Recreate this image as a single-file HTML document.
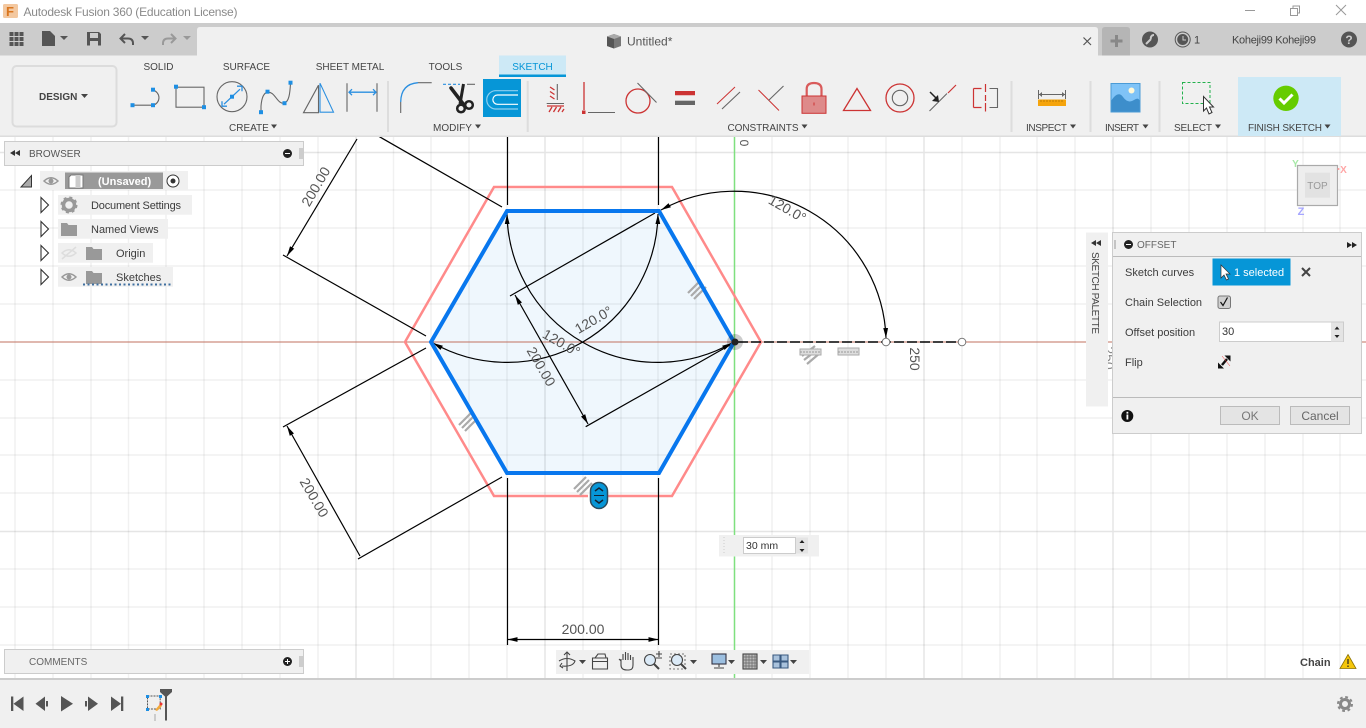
<!DOCTYPE html>
<html><head><meta charset="utf-8"><title>Autodesk Fusion 360</title>
<style>
html,body{margin:0;padding:0;background:#fff;width:1366px;height:728px;overflow:hidden}
svg{display:block;position:absolute;left:0;top:0}
text{font-family:"Liberation Sans",Arial,sans-serif;font-size:10px;fill:#444}
.l{font-size:11px;fill:#3c3c3c}
.d{font-size:14px;fill:#555;text-anchor:middle}
.m{text-anchor:middle}
</style></head><body>
<svg width="1366" height="728" viewBox="0 0 1366 728" xmlns="http://www.w3.org/2000/svg">
<defs>
<marker id="a" viewBox="0 0 10 6" refX="10" refY="3" markerWidth="10" markerHeight="6" markerUnits="userSpaceOnUse" orient="auto-start-reverse"><path d="M0 .6L10 3L0 5.4z" fill="#000"/></marker>
<path id="eye" d="M-7 0Q0-6.5 7 0Q0 6.5-7 0z"/>
<path id="folder" d="M0 2h6l1.5 2H16v11H0z" fill="#999"/>
</defs>
<rect width="1366" height="728" fill="#fff"/>

<!-- hexagon fill -->
<path d="M431 342L507 211H659L734 342L659 473H507z" fill="#eff7fd"/>
<!-- grid -->
<path d="M15 137V680M53 137V680M91 137V680M128.500 137V680M166 137V680M204 137V680M242 137V680M280 137V680M318 137V680M393.500 137V680M431 137V680M469 137V680M507 137V680M583 137V680M621 137V680M658 137V680M696 137V680M772 137V680M810 137V680M848 137V680M886 137V680M962 137V680M1000 137V680M1037 137V680M1075 137V680M1151 137V680M1189 137V680M1227 137V680M1265 137V680M1303 137V680M1340 137V680" stroke="#000" stroke-opacity=".055" stroke-width="1.500" fill="none"/>
<path d="M0 190H1366M0 228H1366M0 266H1366M0 304H1366M0 380H1366M0 418H1366M0 455H1366M0 493H1366M0 569H1366M0 607H1366M0 645H1366" stroke="#000" stroke-opacity=".055" stroke-width="1.500" fill="none"/>
<path d="M356 137V680M545 137V680M924 137V680M1113 137V680M0 152.500H1366M0 531.500H1366" stroke="#000" stroke-opacity=".1" stroke-width="1.500" fill="none"/>
<!-- axes -->
<path d="M0 342H1366" stroke="#c0705f" stroke-width="1"/>
<path d="M734.500 137V680" stroke="#7fe07f" stroke-width="1.500"/>
<text transform="translate(740,143) rotate(90)" class="d" style="font-size:12px">0</text>
<!-- red offset hexagon -->
<path d="M588 496H494L405 342L494 187H672L761 342L672 496H608" fill="none" stroke="#ff8a8a" stroke-width="2.500"/>
<!-- constraint glyphs -->
<g stroke="#aaa" stroke-width="2.200" fill="none">
<path d="M688 293L700 281M691 296L703 284M694 299L706 287"/>
<path d="M459 425L471 413M462 428L474 416M465 431L477 419"/>
<path d="M574 489L586 477M577 492L589 480M580 495L592 483"/>
<path d="M802 356L815 346M804 360L818 349M807 364L820 353"/>
</g>
<path d="M800 349H821V355H800zM838 348H859V355H838z" fill="#ddd" stroke="#aaa" stroke-width="1"/>
<path d="M800 352H821M838 352H859" stroke="#999" stroke-dasharray="2 1" />
<!-- dimension lines -->
<g stroke="#000" stroke-width="1.200" fill="none">
<path d="M507.500 137V205M658.500 137V205M507.500 478V645M658.500 478V645"/>
<path d="M507.500 639.500H658.500" marker-start="url(#a)" marker-end="url(#a)"/>
<path d="M502 207L352 121M426 336L283 255"/>
<path d="M357 139L287 256" marker-end="url(#a)"/>
<path d="M426 348L283 427M502 477L358 559"/>
<path d="M287 426L360 556" marker-start="url(#a)"/>
<path d="M510 296L655 213M585.700 426.700L730 345"/>
<path d="M515 295L588 424" marker-start="url(#a)" marker-end="url(#a)"/>
<path d="M433 343A151 151 0 0 0 658 214" marker-start="url(#a)" marker-end="url(#a)"/>
<path d="M507 214A151 151 0 0 0 732 343" marker-start="url(#a)" marker-end="url(#a)"/>
<path d="M661 210A152 152 0 0 1 886 338" marker-start="url(#a)" marker-end="url(#a)"/>
</g>
<path d="M738 342H962" stroke="#000" stroke-width="1.500" stroke-dasharray="10 3"/>
<circle cx="886" cy="342" r="3.800" fill="#fff" stroke="#777"/>
<circle cx="962" cy="342" r="3.800" fill="#fff" stroke="#777"/>
<!-- blue hexagon -->
<path d="M431 342L507 211H659L734 342L659 473H507z" fill="none" stroke="#0877ee" stroke-width="4"/>
<circle cx="735" cy="342" r="8" fill="#000" fill-opacity=".2"/>
<circle cx="735" cy="342" r="3.500" fill="#222"/>
<!-- dim text -->
<text class="d" x="583" y="634">200.00</text>
<text class="d" transform="translate(320,189) rotate(-60)">200.00</text>
<text class="d" transform="translate(310,500) rotate(60)">200.00</text>
<text class="d" transform="translate(537,369) rotate(60)">200.00</text>
<text class="d" transform="translate(559,347) rotate(30)">120.0°</text>
<text class="d" transform="translate(596,324) rotate(-30)">120.0°</text>
<text class="d" transform="translate(785,213) rotate(30)">120.0°</text>
<text class="d" transform="translate(910,359) rotate(90)">250</text>
<text class="d" transform="translate(1104,358) rotate(90)" style="fill:#888">250</text>
<!-- pill -->
<rect x="590.500" y="482.500" width="17" height="26" rx="8.500" fill="#0696d7" stroke="#2b4a5c" stroke-width="1.500"/>
<path d="M595 491l4-3 4 3M595 500l4 3 4-3" stroke="#123" stroke-width="1.500" fill="none"/><path d="M594 495.500H604" stroke="#123"/>

<!-- input 30mm -->
<rect x="719" y="535" width="100" height="21.500" fill="#f0f0f0"/>
<path d="M724 537V555" stroke="#ccc" stroke-dasharray="1 2"/>
<rect x="743.500" y="537.500" width="52" height="16" fill="#fff" stroke="#ccc"/>
<text x="746" y="549" class="l" style="font-size:10.500px;fill:#333">30 mm</text>
<rect x="796" y="537.500" width="12" height="16" fill="#e4e4e4"/>
<path d="M799.500 543l2.500-3 2.500 3zM799.500 549l2.500 3 2.500-3z" fill="#222"/>

<!-- navbar -->
<rect x="556" y="650" width="253" height="24" fill="#f0f0f0"/>
<g fill="none" stroke="#444" stroke-width="1.100">
<path d="M567 652V671M559 661q8-5 16 0q-2 6-13 5M562 663l-2 3 3 2M564 655l3-3 3 3"/>
<path d="M592.500 658H607.500V669H592.500zM592.500 661.500H607.500M595 658L598 654H605L606 658"/>
<path d="M621 659V665q0 5 6 5h2q4 0 4-5V657M623 660V654M625.500 660V652M628 660V653M630.500 660V655M621 661l-2-2"/>
<circle cx="650" cy="660" r="5.500" fill="#dbeaf7"/><path d="M654 664l5 5" stroke-width="2"/><path d="M656 654h6M659 651v6M656 658h6"/>
<rect x="670" y="654" width="15" height="15" stroke-dasharray="2 2" stroke="#777"/><circle cx="677" cy="660" r="5.500" fill="#dbeaf7"/><path d="M681 664l5 5" stroke-width="2"/>
<rect x="712" y="654" width="14" height="10" fill="#9cbfe0" stroke="#334"/><path d="M719 664v3M714 668h10"/>
<rect x="743" y="654" width="14" height="15" fill="#bbb"/><path d="M746 654v15M749 654v15M752 654v15M755 654v15M743 657h14M743 660h14M743 663h14M743 666h14" stroke="#666" stroke-width=".7"/>
<path d="M773 655h7v6h-7zM781 655h7v6h-7zM773 662h7v6h-7zM781 662h7v6h-7z" fill="#a9c2dc" stroke="#3a5a80"/>
</g>
<path d="M579 660h7l-3.500 4zM690 660h7l-3.500 4zM728 660h7l-3.500 4zM760 660h7l-3.500 4zM790 660h7l-3.500 4z" fill="#444"/>

<!-- browser panel -->
<rect x="4.500" y="141.500" width="299" height="24" fill="#f0f0f0" stroke="#ccc"/>
<path d="M15 150v6l-5-3zM20 150v6l-5-3z" fill="#333"/>
<text x="29" y="157" style="fill:#555">BROWSER</text>
<circle cx="287.500" cy="153.500" r="4.500" fill="#222"/><path d="M285 153.500h5" stroke="#fff"/>
<path d="M300 148v11M302 148v11" stroke="#999" stroke-width=".8"/>
<path d="M31.500 175.500V187H21z" fill="#aaa" stroke="#333"/>
<rect x="40" y="171" width="148" height="19" fill="#f0f0f0"/>
<rect x="65" y="172.500" width="98" height="16.500" fill="#999"/>
<use href="#eye" x="51" y="181" fill="none" stroke="#999" stroke-width="1.500"/><circle cx="51" cy="181" r="2.500" fill="#999"/>
<path d="M71 175h12v13H69V177z" fill="#fff" stroke="#777"/><path d="M78 175v13" stroke="#ccc" stroke-width="5"/>
<text x="98" y="185" style="font-size:11px;font-weight:bold;fill:#fff">(Unsaved)</text>
<circle cx="173" cy="181" r="6" fill="#fff" stroke="#333"/><circle cx="173" cy="181" r="2.500" fill="#333"/>
<rect x="58" y="195" width="134" height="19.700" fill="#f0f0f0"/>
<rect x="58" y="219" width="110" height="19.700" fill="#f0f0f0"/>
<rect x="58" y="243" width="95" height="19.700" fill="#f0f0f0"/>
<rect x="58" y="267" width="115" height="19.700" fill="#f0f0f0"/>
<g fill="#fff" stroke="#333" stroke-width="1.100">
<path d="M41 197.500l7.500 7.500-7.500 7.500zM41 221.500l7.500 7.500-7.500 7.500zM41 245.500l7.500 7.500-7.500 7.500zM41 269.500l7.500 7.500-7.500 7.500z"/>
</g>
<circle cx="69" cy="205" r="5.500" fill="none" stroke="#999" stroke-width="3.500"/>
<circle cx="69" cy="205" r="7.500" fill="none" stroke="#999" stroke-width="2" stroke-dasharray="3 2.900"/>
<use href="#folder" x="61" y="221"/><use href="#folder" x="86" y="245"/><use href="#folder" x="86" y="269"/>
<use href="#eye" x="69" y="253" fill="none" stroke="#ddd" stroke-width="1.500"/><path d="M62 259L76 247" stroke="#ddd" stroke-width="1.500"/>
<use href="#eye" x="69" y="277" fill="none" stroke="#999" stroke-width="1.500"/><circle cx="69" cy="277" r="2.500" fill="#999"/>
<text x="91" y="209" class="l" textLength="90">Document Settings</text>
<text x="91" y="233" class="l">Named Views</text>
<text x="116" y="257" class="l">Origin</text>
<text x="116" y="281" class="l">Sketches</text>
<path d="M83 284.500H171" stroke="#3f6fa0" stroke-width="2" stroke-dasharray="2 2.500"/>

<!-- comments -->
<rect x="4.500" y="649.500" width="299" height="24" fill="#f0f0f0" stroke="#ccc"/>
<text x="29" y="665" style="fill:#666">COMMENTS</text>
<circle cx="287.500" cy="661.500" r="4.500" fill="#222"/><path d="M285 661.500h5M287.500 659v5" stroke="#fff"/>
<path d="M300 656v11M302 656v11" stroke="#999" stroke-width=".8"/>

<!-- palette tab -->
<rect x="1086" y="232.500" width="22" height="174" fill="#f0f0f0"/>
<path d="M1096 240v6l-5-3zM1101 240v6l-5-3z" fill="#333"/>
<text transform="translate(1092,252) rotate(90)" style="font-size:10px;fill:#444" textLength="82">SKETCH PALETTE</text>

<!-- offset dialog -->
<rect x="1112.500" y="232.500" width="249" height="201" fill="#f0f0f0" stroke="#ccc"/>
<path d="M1113 256.500H1361M1113 397.500H1361" stroke="#bbb"/>
<path d="M1115 240v9" stroke="#999"/>
<circle cx="1128.500" cy="244.500" r="4.500" fill="#222"/><path d="M1126 244.500h5" stroke="#fff"/>
<text x="1137" y="248" style="fill:#666">OFFSET</text>
<path d="M1347 242v6l5-3zM1352 242v6l5-3z" fill="#222"/>
<text x="1125" y="276" class="l">Sketch curves</text>
<rect x="1212.500" y="258.500" width="78" height="27" fill="#0696d7"/>
<path d="M1221 265v13l3-3 2.500 5 2-1-2.500-5h4z" fill="#fff" stroke="#333" stroke-width=".7"/>
<text x="1234" y="276" style="font-size:11px;fill:#fff">1 selected</text>
<path d="M1302 268l8 8M1310 268l-8 8" stroke="#444" stroke-width="2"/>
<text x="1125" y="306" class="l">Chain Selection</text>
<rect x="1218" y="296" width="12.500" height="12.500" rx="2" fill="#d0d0d0" stroke="#777"/>
<path d="M1220.500 302l2.500 3.500 4.500-8" fill="none" stroke="#111" stroke-width="1.200"/>
<text x="1125" y="336" class="l">Offset position</text>
<rect x="1219.500" y="322" width="124" height="19.500" fill="#fff" stroke="#ccc"/>
<text x="1222" y="335" style="font-size:11px;fill:#333">30</text>
<rect x="1331" y="322.500" width="12" height="19" fill="#e4e4e4"/>
<path d="M1334.500 329.500l2.500-3 2.500 3zM1334.500 335l2.500 3 2.500-3z" fill="#222"/>
<text x="1125" y="366" class="l">Flip</text>
<path d="M1222 365L1227 359" stroke="#111" stroke-width="2.500"/>
<path d="M1218 368.500v-6l6 6zM1230.500 355.500v6l-6-6z" fill="#111"/>
<path d="M1222 356L1230 366" stroke="#e33" stroke-width=".5"/>
<circle cx="1127.300" cy="416" r="6" fill="#111"/><rect x="1126.500" y="414.500" width="1.800" height="5" fill="#fff"/><rect x="1126.500" y="411.800" width="1.800" height="1.800" fill="#fff"/>
<rect x="1220.500" y="406.500" width="59" height="18" fill="#e4e4e4" stroke="#bbb"/>
<rect x="1290.500" y="406.500" width="59" height="18" fill="#e4e4e4" stroke="#bbb"/>
<text x="1250" y="420" class="l m" style="font-size:12px;fill:#777">OK</text>
<text x="1320" y="420" class="l m" style="font-size:12px;fill:#666">Cancel</text>

<!-- view cube -->
<rect x="1297.500" y="165.500" width="40" height="40" fill="#eee" stroke="#aaa" stroke-width="1.200"/>
<rect x="1305" y="172.700" width="25" height="25" fill="#e2e2e2"/>
<text x="1317.500" y="189" class="m" style="font-size:10px;fill:#999">TOP</text>
<text x="1295.500" y="167" class="m" style="font-size:10px;fill:#a6e8a6;font-weight:bold">Y</text>
<text x="1343.500" y="173" class="m" style="font-size:10px;fill:#ffa6a6;font-weight:bold">X</text>
<text x="1301" y="215" class="m" style="font-size:11px;fill:#a6a6ff;font-weight:bold">Z</text>
<circle cx="1338.500" cy="169" r="1" fill="#f99"/>

<text x="1300" y="666" style="font-size:11px;font-weight:bold;fill:#444">Chain</text>
<path d="M1348 654.500l8 14h-16z" fill="#f5c60a" stroke="#8a7000" stroke-width=".8"/>
<path d="M1348 659v5M1348 665.500v1.500" stroke="#222" stroke-width="1.200"/>

<!-- title bar -->
<rect width="1366" height="23.500" fill="#fff"/>
<rect x="3" y="4" width="15" height="14" rx="1.500" fill="#f3c8a0"/>
<text x="6" y="16" style="font-size:13px;font-weight:bold;fill:#d9761f">F</text>
<text x="23.500" y="16" style="font-size:12px;fill:#8a8a8a" textLength="214">Autodesk Fusion 360 (Education License)</text>
<path d="M1245 10.500H1255" stroke="#999"/>
<path d="M1290.500 8.500h7v7h-7zM1293 8.500v-2.500h6.500v7H1298" fill="none" stroke="#999"/>
<path d="M1336 5l10 10M1346 5l-10 10" stroke="#999"/>

<!-- gray band -->
<rect y="23" width="1366" height="32.500" fill="#ccc"/>
<path d="M197 56V30q0-3 3-3H1095q3 0 3 3V56z" fill="#f0f0f0"/>
<path d="M1102 56V30q0-3 3-3H1127q3 0 3 3V56z" fill="#b5b5b5"/>
<path d="M1116.500 35v12M1110.500 41h12" stroke="#888" stroke-width="3"/>
<path d="M1083.500 37.500l7.500 7.500M1091 37.500l-7.500 7.500" stroke="#555" stroke-width="1.200"/>
<path d="M614 34l7 2.500v9.500l-7 2.500-7-2.500v-9.500z" fill="#777"/><path d="M607 36.500l7 2.500 7-2.500-7-2.500z" fill="#aaa"/><path d="M614 39v9.500l-7-2.500v-9.500z" fill="#555"/>
<text x="627" y="45.500" style="font-size:12px;fill:#555">Untitled*</text>
<!-- QAT -->
<g transform="translate(0,-1)">
<g fill="#555">
<path d="M9.500 33h4v4h-4zM14.500 33h4v4h-4zM19.500 33h4v4h-4zM9.500 38h4v4h-4zM14.500 38h4v4h-4zM19.500 38h4v4h-4zM9.500 43h4v4h-4zM14.500 43h4v4h-4zM19.500 43h4v4h-4z"/>
<path d="M42 32h8l5 5v10H42z"/>
<path d="M60 37h8l-4 4z"/>
<path d="M87 33h12l2 2v11.500H87zM90 34v5h8v-5zM90 42v4.500h8V42z" fill-rule="evenodd"/>
<path d="M141 37h8l-4 4z"/>
</g>
<path d="M121 39.500h7q5 0 5 5v1.500M125 35l-4.500 4.500 4.500 4.500" fill="none" stroke="#555" stroke-width="2"/>
<path d="M175 39.500h-7q-5 0-5 5v1.500M171 35l4.500 4.500-4.500 4.500" fill="none" stroke="#999" stroke-width="2"/>
<path d="M183 37h8l-4 4z" fill="#999"/>
</g>
<!-- right icons -->
<circle cx="1150" cy="39.500" r="8" fill="#555"/>
<path d="M1146 44l5-5M1151 39a3 3 0 0 1 3-4" stroke="#ccc" stroke-width="2" fill="none"/>
<circle cx="1182.700" cy="39.500" r="7.500" fill="#ccc" stroke="#555" stroke-width="1"/><circle cx="1182.700" cy="39.500" r="5.500" fill="#555"/>
<path d="M1183 36v4h3" fill="none" stroke="#ccc"/>
<text x="1194" y="43.500" style="font-size:11px;fill:#444">1</text>
<text x="1232" y="43.500" style="font-size:11px;fill:#444" textLength="84">Koheji99 Koheji99</text>
<circle cx="1349" cy="39.500" r="8" fill="#555"/>
<text x="1349" y="44" class="m" style="font-size:12px;font-weight:bold;fill:#ccc">?</text>

<!-- toolbar -->
<rect y="55.500" width="1366" height="81" fill="#f0f0f0"/>
<rect y="135.500" width="1366" height="1.500" fill="#ddd"/>
<rect x="12.500" y="66" width="104" height="60.500" rx="4" fill="#f0f0f0" stroke="#dcdcdc" stroke-width="2"/>
<text x="39" y="100" style="font-weight:bold;font-size:10px;fill:#444">DESIGN</text>
<path d="M81 94h7l-3.500 4z" fill="#444"/>
<rect x="499" y="55.500" width="67" height="21.500" fill="#cde9f6"/>
<rect x="499" y="74.500" width="67" height="2.500" fill="#0696d7"/>
<text x="158.500" y="70" class="m">SOLID</text>
<text x="246.500" y="70" class="m">SURFACE</text>
<text x="350" y="70" class="m">SHEET METAL</text>
<text x="445.500" y="70" class="m">TOOLS</text>
<text x="532.500" y="70" class="m" style="fill:#0696d7">SKETCH</text>

<!-- create -->
<g transform="translate(0,-1.800)">
<g fill="none" stroke="#666" stroke-width="1.100">
<path d="M133 107H153M153 92a7.700 7.700 0 0 1 0 15"/>
<rect x="176" y="89" width="28" height="20"/>
<circle cx="232" cy="98.500" r="15"/>
<path d="M261 114V108Q262 95 267.500 94C275 93 277 106 284 105C289 104 290 95 290.500 85"/>
<path d="M303.500 114.500L318.500 87V114.500z"/>
<path d="M347 85V113.500M377 85V113.500"/>
</g>
<path d="M320 85L333.500 114H320z" fill="none" stroke="#2a8fe0" stroke-width="1.100"/>
<g stroke="#2a8fe0" stroke-width="1.300" fill="none">
<path d="M224 106L240 91M222 103v5h5M237 88h5v5"/>
<path d="M349 94H376M352 91l-3 3 3 3M373 91l3 3-3 3"/>
</g>
<g fill="#1e8fe3">
<rect x="130.500" y="105" width="4" height="4"/><rect x="151" y="105" width="4" height="4"/><rect x="151" y="89.500" width="4" height="4"/>
<rect x="174" y="86.500" width="4" height="4"/><rect x="202" y="107" width="4" height="4"/>
<rect x="230" y="96.500" width="4" height="4"/>
<rect x="259" y="112" width="4" height="4"/><rect x="265.500" y="91.500" width="4" height="4"/><rect x="282.500" y="103" width="4" height="4"/><rect x="288.500" y="82.500" width="4" height="4"/>
</g>
</g>
<path d="M527.700 81V132M388 81V132M1011.500 81V132M1090.500 81V132M1159.500 81V132" stroke="#ddd" stroke-width="2"/>
<text x="229" y="131">CREATE</text><path d="M271 124.500h6l-3 4z" fill="#444"/>
<!-- modify -->
<path d="M400.700 113V102" stroke="#666" stroke-width="1.100"/>
<path d="M400.700 102Q401 84 418 82.700" fill="none" stroke="#2a8fe0" stroke-width="1.300"/>
<path d="M418 82.700H431.700" stroke="#666" stroke-width="1.100"/>
<path d="M443 84.300H460" stroke="#2a8fe0" stroke-width="1.100" stroke-dasharray="3 2"/>
<path d="M467 84.300H475" stroke="#666" stroke-width="1.100"/>
<path d="M451 88L464 105" stroke="#222" stroke-width="3.500" stroke-linecap="round"/>
<path d="M463.500 84L460 104" stroke="#222" stroke-width="3"/>
<circle cx="461" cy="108.500" r="3.800" fill="none" stroke="#222" stroke-width="2.500"/>
<circle cx="469" cy="105" r="3.800" fill="none" stroke="#222" stroke-width="2.500"/>
<rect x="483" y="79" width="38" height="38" fill="#0696d7"/>
<path d="M518 90.700H495A9.200 9.200 0 0 0 495 109H518" fill="none" stroke="#8fd0ef" stroke-width="1.200"/>
<path d="M518 95H497.500A4.650 4.650 0 0 0 497.500 104.300H518" fill="none" stroke="#fff" stroke-width="1.200"/>
<text x="433" y="131">MODIFY</text><path d="M475 124.500h6l-3 4z" fill="#444"/>

<!-- constraints -->
<g fill="none" stroke="#c33" stroke-width="1.300">
<path d="M550 87l4.500 3M550 91.500l4.500 3M550 96l4.500 3M547 106H564M549 112l3-5M553.500 112l3-5M558 112l3-5M562 112l2-3"/>
<path d="M584 82V110"/>
<circle cx="638" cy="101" r="12"/>
<path d="M675 92.800H695M717 104L735 87M758.500 90L779 110.500" stroke-width="1"/>
<path d="M857 88.500L843.500 110.500H870.500z"/>
<circle cx="900" cy="98" r="14"/>
<path d="M948 93L956 85M973.500 88.500V107.500M973.500 88.500H981.500M973.500 107.500H981.500" stroke-width="1.200"/>
<path d="M985.500 84V92M985.500 95V101M985.500 103V111.500" stroke-width="1.200"/>
</g>
<path d="M675 91h20v4.200h-20z" fill="#c33"/>
<rect x="675" y="100.700" width="20" height="4.300" fill="#666"/>
<rect x="582" y="110.500" width="3.500" height="3.500" fill="#c33"/>
<g fill="none" stroke="#666" stroke-width="1.100">
<path d="M557.300 84V100M546.700 103.500H564"/>
<path d="M588 112.500H615"/>
<path d="M637.500 83L656.500 102.500"/>
<path d="M722 109L740 92M768.500 100.500L783.500 86"/>
<circle cx="900" cy="98" r="7.700"/>
<path d="M929.500 111L947 93.500M989.500 88.500H997.500V107.500H989.500"/>
</g>
<path d="M806.700 96V89Q806.700 83 814 83T821.500 89V96" fill="none" stroke="#d95b5b" stroke-width="2.200"/>
<rect x="802" y="96" width="24" height="17.300" fill="#de8a8a" stroke="#c33"/>
<path d="M814 102.500v3" stroke="#c33"/>
<path d="M930 92l6 6" stroke="#222" stroke-width="1.500"/><path d="M939 102l-1-7-6 6z" fill="#222"/>
<text x="727.500" y="131" textLength="71">CONSTRAINTS</text><path d="M801.500 124.500h6l-3 4z" fill="#444"/>

<!-- inspect -->
<rect x="1038" y="99.500" width="28" height="6.500" fill="#f5a40c"/>
<path d="M1041 100v2M1044 100v2M1047 100v2M1050 100v2M1053 100v2M1056 100v2M1059 100v2M1062 100v2" stroke="#a66d00" stroke-width=".7"/>
<path d="M1038.500 90V99M1065.500 90V99M1039 94.500H1065" stroke="#666"/>
<path d="M1042 92v5l-3-2.500zM1062 92v5l3-2.500z" fill="#666"/>
<text x="1026" y="131" textLength="41">INSPECT</text><path d="M1070 124.500h6l-3 4z" fill="#444"/>
<!-- insert -->
<rect x="1111" y="83.500" width="29" height="28.500" fill="#7fc3f7"/>
<path d="M1111 112V101Q1118 90 1123 97T1134 100T1140 104V112z" fill="#3d8ecb"/>
<circle cx="1131.500" cy="90.500" r="3" fill="#fff8d8"/>
<rect x="1111" y="83.500" width="29" height="28.500" fill="none" stroke="#4b9bd6"/>
<text x="1105" y="131" textLength="34">INSERT</text><path d="M1142.500 124.500h6l-3 4z" fill="#444"/>
<!-- select -->
<rect x="1182.500" y="82.500" width="27.500" height="21" fill="none" stroke="#22b14c" stroke-dasharray="3 2"/>
<path d="M1203.500 96.500V111L1206.500 108L1209 114L1212 112.500L1209.500 107H1213.500z" fill="#fff" stroke="#333"/>
<text x="1174" y="131" textLength="38">SELECT</text><path d="M1215 124.500h6l-3 4z" fill="#444"/>
<!-- finish -->
<rect x="1238" y="77" width="103" height="59" fill="#cde9f6"/>
<circle cx="1286" cy="98.300" r="12.700" fill="#66cc00"/>
<path d="M1279.500 98.500l4.500 4.500 8.500-8.500" fill="none" stroke="#fff" stroke-width="3"/>
<text x="1248" y="131" textLength="74">FINISH SKETCH</text><path d="M1324.500 124.500h6l-3 4z" fill="#444"/>

<!-- timeline -->
<rect y="678" width="1366" height="50" fill="#f0f0f0"/>
<rect y="678" width="1366" height="2" fill="#ccc"/>
<g fill="#555">
<path d="M11 696.500h2.300v14.500H11zM13.500 703.700L23.500 696.500V711z"/>
<path d="M35.500 703.700L45 696.500V711zM46 701h2v5.500h-2z"/>
<path d="M61 696L73 703.700L61 711.500z"/>
<path d="M85 701h2v5.500h-2zM88 696.500L98 703.700L88 711z"/>
<path d="M111 696.500L121 703.700L111 711zM121 696.500h2.300v14.500H121z"/>
<path d="M160 689H172V692L167 696.500V720.500H165V696.500L160 692z"/>
</g>
<rect x="147.500" y="696" width="12.700" height="13" fill="none" stroke="#555" stroke-dasharray="2 1"/>
<path d="M146 695h3v3h-3zM159 695h3v3h-3zM146 708h3v3h-3z" fill="#1e8fe3"/>
<path d="M155 710l5-6 2 2-5 5z" fill="#f2a93b"/><circle cx="161" cy="704" r="1.500" fill="#e33"/>
<rect x="154" y="714" width="2" height="7" fill="#ccc"/>
<circle cx="1345" cy="704" r="4.500" fill="none" stroke="#888" stroke-width="3"/>
<circle cx="1345" cy="704" r="7" fill="none" stroke="#888" stroke-width="2" stroke-dasharray="2.800 2.700"/>
</svg>
</body></html>
